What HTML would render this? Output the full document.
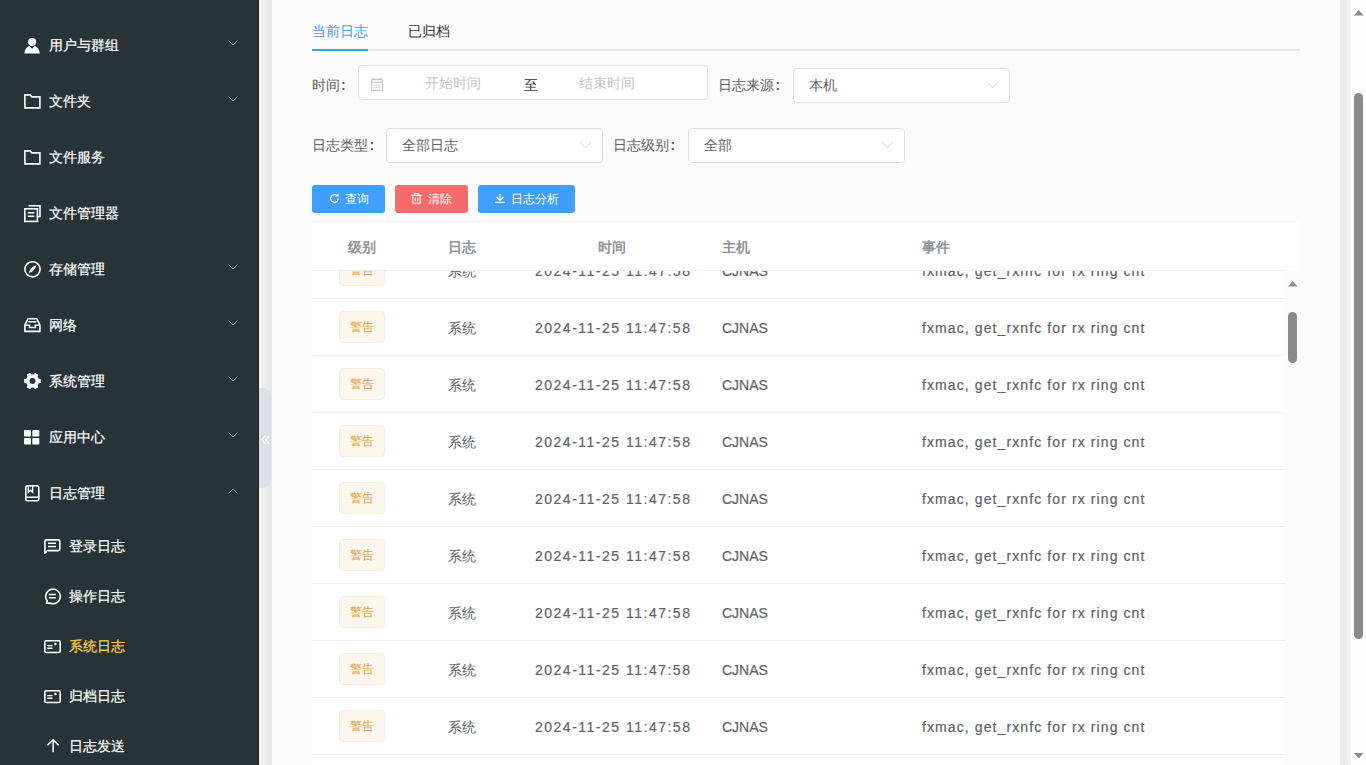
<!DOCTYPE html>
<html><head><meta charset="utf-8">
<style>
*{box-sizing:border-box}
html,body{margin:0;padding:0;width:1366px;height:765px;overflow:hidden;background:#fafafa;font-family:"Liberation Sans",sans-serif}
#side{position:absolute;left:0;top:0;width:259px;height:765px;background:#273338;border-right:1px solid #1c252b}
.t{position:absolute;white-space:nowrap}
svg{position:absolute;overflow:visible}
.mt{color:#fff;font-size:14px;line-height:16px;-webkit-text-stroke:0.2px currentColor}
#strip{position:absolute;left:259px;top:0;width:13px;height:765px;background:linear-gradient(to right,#f3f3f3 0,#f1f1f1 2px,#eeeeee 7px,#e7e7e7 11px,#e7e7ee 13px)}
#collapse{position:absolute;left:259px;top:388px;width:12px;height:100px;background:#dcdfe8;border-radius:0 9px 9px 0}
#main{position:absolute;left:272px;top:0;width:1068px;height:765px;background:#fbfbfb}
#rstrip{position:absolute;left:1340px;top:0;width:11px;height:765px;background:linear-gradient(to right,#e9eaf2 0,#e7e7e7 1.5px,#ebebeb 4px,#f2f2f2 11px)}
#vscroll{position:absolute;left:1351px;top:0;width:15px;height:765px;background:#fcfcfc}
.box{position:absolute;background:#fff;border:1px solid #dcdfe6;border-radius:4px}
.lbl{color:#606266;font-size:14px;line-height:16px}
.btn{position:absolute;top:185px;height:28px;border-radius:3px}
.bt{color:#fff;font-size:12px;line-height:14px}
#thead{position:absolute;left:312px;top:223px;width:988px;height:48px;background:#fff}
#thline{position:absolute;left:312px;top:270px;width:973px;height:1px;background:#ebeef5}
.th{font-size:14px;font-weight:bold;color:#909399;line-height:16px}
#tbody{position:absolute;left:312px;top:271px;width:973px;height:494px;overflow:hidden;background:#fff}
.row{position:absolute;left:0;width:973px;height:57px;border-bottom:1px solid #ebeef5}
.tag{position:absolute;left:27px;top:12px;width:46px;height:32px;background:#fdf6ec;border:1px solid #faecd8;border-radius:4px}
.tagt{color:#e6a23c;font-size:12px;line-height:14px}
.td{font-size:14px;color:#606266;line-height:16px}
</style></head><body>
<div id="main"></div>
<div id="side"><svg style="left:23.8px;top:37.6px" width="17" height="17"><circle cx="8.1" cy="4.0" r="4.0" fill="#fff"/><path d="M0.4 15.4 C0.6 11.6 2.7 8.9 5.5 8.0 L8.1 10.7 L10.7 8.0 C13.5 8.9 15.6 11.6 15.8 15.4 Z" fill="#fff"/></svg><div class="t mt" style="left:49px;top:37px;">用户与群组</div><svg style="left:228px;top:40px" width="10" height="6" viewBox="0 0 10 6"><path d="M0.5 0.5 L5 5 L9.5 0.5" stroke="#909399" stroke-width="1" fill="none"/></svg><svg style="left:23.6px;top:93.8px" width="17" height="17"><path d="M0.9 0.9 H6 L8 2.9 H15.9 V13.9 H0.9 Z" stroke="#fff" stroke-width="1.6" fill="none" stroke-linejoin="miter"/></svg><div class="t mt" style="left:49px;top:93px;">文件夹</div><svg style="left:228px;top:96px" width="10" height="6" viewBox="0 0 10 6"><path d="M0.5 0.5 L5 5 L9.5 0.5" stroke="#909399" stroke-width="1" fill="none"/></svg><svg style="left:23.6px;top:149.8px" width="17" height="17"><path d="M0.9 0.9 H6 L8 2.9 H15.9 V13.9 H0.9 Z" stroke="#fff" stroke-width="1.6" fill="none" stroke-linejoin="miter"/></svg><div class="t mt" style="left:49px;top:149px;">文件服务</div><svg style="left:23.6px;top:204.6px" width="17" height="17"><path d="M5.3 1.6 V0.8 H16 V11.5 H13.8" stroke="#fff" stroke-width="1.6" fill="none"/><rect x="0.8" y="3.8" width="12.6" height="12.6" stroke="#fff" stroke-width="1.6" fill="none"/><path d="M3.7 7.8 H10.3 M3.7 11.2 H10.3" stroke="#fff" stroke-width="1.5"/></svg><div class="t mt" style="left:49px;top:205px;">文件管理器</div><svg style="left:23.6px;top:260.8px" width="17" height="17"><circle cx="8.5" cy="8.3" r="7.6" stroke="#fff" stroke-width="1.6" fill="none"/><path d="M4.8 12 C5.5 8.5 8.5 5.2 12.3 4.3 C11.5 8 8.6 11.2 4.8 12 Z" fill="#fff"/></svg><div class="t mt" style="left:49px;top:261px;">存储管理</div><svg style="left:228px;top:264px" width="10" height="6" viewBox="0 0 10 6"><path d="M0.5 0.5 L5 5 L9.5 0.5" stroke="#909399" stroke-width="1" fill="none"/></svg><svg style="left:23.6px;top:317.8px" width="17" height="17"><path d="M0.9 13.4 V7.2 L3.9 0.8 H12.9 L15.9 7.2 V13.4 Z" stroke="#fff" stroke-width="1.6" fill="none" stroke-linejoin="round"/><path d="M1 7.2 H5.5 V9.6 H11.3 V7.2 H15.8 M4.3 3.7 H12.5" stroke="#fff" stroke-width="1.5" fill="none"/></svg><div class="t mt" style="left:49px;top:317px;">网络</div><svg style="left:228px;top:320px" width="10" height="6" viewBox="0 0 10 6"><path d="M0.5 0.5 L5 5 L9.5 0.5" stroke="#909399" stroke-width="1" fill="none"/></svg><svg style="left:23.5px;top:372.9px" width="17" height="17"><path fill="#fff" fill-rule="evenodd" d="M14.70 5.74 L16.78 6.09 L16.78 9.91 L14.70 10.26 L13.56 12.24 L14.30 14.22 L10.99 16.13 L9.65 14.50 L7.35 14.50 L6.01 16.13 L2.70 14.22 L3.44 12.24 L2.30 10.26 L0.22 9.91 L0.22 6.09 L2.30 5.74 L3.44 3.76 L2.70 1.78 L6.01 -0.13 L7.35 1.50 L9.65 1.50 L10.99 -0.13 L14.30 1.78 L13.56 3.76 Z M11.40 8.00 A2.9 2.9 0 1 0 5.60 8.00 A2.9 2.9 0 1 0 11.40 8.00 Z"/></svg><div class="t mt" style="left:49px;top:373px;">系统管理</div><svg style="left:228px;top:376px" width="10" height="6" viewBox="0 0 10 6"><path d="M0.5 0.5 L5 5 L9.5 0.5" stroke="#909399" stroke-width="1" fill="none"/></svg><svg style="left:24.4px;top:429.8px" width="17" height="17"><rect x="0" y="0" width="7" height="6.6" rx="0.8" fill="#fff"/><rect x="8.3" y="0" width="7" height="6.6" rx="0.8" fill="#fff"/><rect x="0" y="7.9" width="7" height="6.6" rx="0.8" fill="#fff"/><rect x="8.3" y="7.9" width="7" height="6.6" rx="0.8" fill="#fff"/></svg><div class="t mt" style="left:49px;top:429px;">应用中心</div><svg style="left:228px;top:432px" width="10" height="6" viewBox="0 0 10 6"><path d="M0.5 0.5 L5 5 L9.5 0.5" stroke="#909399" stroke-width="1" fill="none"/></svg><svg style="left:24.9px;top:484.8px" width="17" height="17"><rect x="0.8" y="0.8" width="13" height="15" rx="1.6" stroke="#fff" stroke-width="1.6" fill="none"/><path d="M3.4 1 V7.2 L5.5 5.5 L7.6 7.2 V1 M1 12.2 H13.6" stroke="#fff" stroke-width="1.5" fill="none"/></svg><div class="t mt" style="left:49px;top:485px;">日志管理</div><svg style="left:228px;top:488px" width="10" height="6" viewBox="0 0 10 6"><path d="M0.5 5.5 L5 1 L9.5 5.5" stroke="#909399" stroke-width="1" fill="none"/></svg><svg style="left:43.8px;top:539px" width="17" height="17"><path d="M0.9 14.2 V2.5 Q0.9 0.9 2.5 0.9 H14.2 Q15.8 0.9 15.8 2.5 V10 Q15.8 11.6 14.2 11.6 H3.5 Z" stroke="#fff" stroke-width="1.6" fill="none" stroke-linejoin="round"/><path d="M4 4.2 H12 M4 7.5 H12" stroke="#fff" stroke-width="1.5"/></svg><div class="t mt" style="left:69px;top:538px;">登录日志</div><svg style="left:43.8px;top:589px" width="17" height="17"><path d="M2.4 14.2 L3.3 12 A7.3 7.3 0 1 1 5.8 14 Z" stroke="#fff" stroke-width="1.5" fill="none" stroke-linejoin="round"/><path d="M4.8 5.6 H11.8 M4.8 8.8 H11.8" stroke="#fff" stroke-width="1.5"/></svg><div class="t mt" style="left:69px;top:588px;">操作日志</div><svg style="left:43.8px;top:640px" width="17" height="17"><rect x="0.8" y="0.8" width="15.4" height="11.7" rx="1.4" stroke="#fff" stroke-width="1.6" fill="none"/><path d="M3.2 5.6 H8.5 M3.2 8.3 H8.5" stroke="#fff" stroke-width="1.4"/><circle cx="11.4" cy="4" r="1.2" fill="#fff"/></svg><div class="t mt" style="left:69px;top:638px;color:#ffd04b">系统日志</div><svg style="left:43.8px;top:690px" width="17" height="17"><rect x="0.8" y="0.8" width="15.4" height="11.7" rx="1.4" stroke="#fff" stroke-width="1.6" fill="none"/><path d="M3.2 5.6 H8.5 M3.2 8.3 H8.5" stroke="#fff" stroke-width="1.4"/><circle cx="11.4" cy="4" r="1.2" fill="#fff"/></svg><div class="t mt" style="left:69px;top:688px;">归档日志</div><svg style="left:46.6px;top:739px" width="17" height="17"><path d="M6.1 13.2 V1 M0.5 6.3 L6.1 0.7 L11.7 6.3" stroke="#fff" stroke-width="1.5" fill="none"/></svg><div class="t mt" style="left:69px;top:738px;">日志发送</div></div>
<div id="strip"></div>
<div id="collapse"></div>
<div id="rstrip"></div>
<div id="vscroll"></div>
<div class="t lbl" style="left:312px;top:23px;color:#409eff">当前日志</div><div class="t lbl" style="left:408px;top:23px;color:#303133">已归档</div><div style="position:absolute;left:312px;top:49px;width:988px;height:2px;background:#e4e7ed"></div><div style="position:absolute;left:312px;top:49px;width:56px;height:2px;background:#409eff"></div><div class="t lbl" style="left:312px;top:77px;">时间<span style="margin-left:1px;font-weight:bold">:</span></div><div class="box" style="left:358px;top:65px;width:350px;height:35px"></div><div class="t lbl" style="left:425px;top:75px;color:#c0c4cc">开始时间</div><div class="t lbl" style="left:524px;top:77px;color:#303133">至</div><div class="t lbl" style="left:579px;top:75px;color:#c0c4cc">结束时间</div><div class="t lbl" style="left:718px;top:77px;">日志来源<span style="margin-left:1.5px;font-weight:bold">:</span></div><div class="box" style="left:793px;top:68px;width:217px;height:35px"></div><div class="t lbl" style="left:809px;top:77px;">本机</div><div class="t lbl" style="left:312px;top:137px;">日志类型<span style="margin-left:1.5px;font-weight:bold">:</span></div><div class="box" style="left:386px;top:128px;width:217px;height:35px"></div><div class="t lbl" style="left:402px;top:137px;">全部日志</div><div class="t lbl" style="left:613px;top:137px;">日志级别<span style="margin-left:1.5px;font-weight:bold">:</span></div><div class="box" style="left:688px;top:128px;width:217px;height:35px"></div><div class="t lbl" style="left:704px;top:137px;">全部</div><div class="btn" style="left:312px;width:73px;background:#409eff"></div><div class="t bt" style="left:345px;top:192px;">查询</div><div class="btn" style="left:395px;width:73px;background:#f56c6c"></div><div class="t bt" style="left:428px;top:192px;">清除</div><div class="btn" style="left:478px;width:97px;background:#409eff"></div><div class="t bt" style="left:511px;top:192px;">日志分析</div><svg style="left:987px;top:82px" width="11" height="7"><path d="M0.5 0.5 L5.5 5.8 L10.5 0.5" stroke="#c8cbd2" stroke-width="0.95" fill="none"/></svg><svg style="left:580px;top:142px" width="11" height="7"><path d="M0.5 0.5 L5.5 5.8 L10.5 0.5" stroke="#c8cbd2" stroke-width="0.95" fill="none"/></svg><svg style="left:882px;top:142px" width="11" height="7"><path d="M0.5 0.5 L5.5 5.8 L10.5 0.5" stroke="#c8cbd2" stroke-width="0.95" fill="none"/></svg><svg style="left:371px;top:78px" width="12" height="13"><rect x="0.6" y="1.4" width="10.8" height="11" rx="0.8" stroke="#c0c4cc" stroke-width="1.1" fill="none"/><path d="M0.6 4.3 H11.4" stroke="#c0c4cc" stroke-width="1"/><path d="M3 0 V2.2 M8.8 0 V2.2" stroke="#c0c4cc" stroke-width="1"/><path d="M2.6 7.2 H9.4 M2.6 9.4 H9.4" stroke="#c0c4cc" stroke-width="0.9" stroke-dasharray="1.6 0.8"/></svg><svg style="left:330px;top:194px" width="9" height="9"><path d="M8.2 4.5 A3.8 3.8 0 1 1 6.9 1.6" stroke="#fff" stroke-width="1.2" fill="none"/><path d="M5.2 2.4 L8.6 2.4 L8.6 -0.6 Z" fill="#fff"/></svg><svg style="left:411px;top:193px" width="11" height="11"><path d="M0.3 2.3 H10.7" stroke="#fff" stroke-width="1.1"/><path d="M3.5 2.3 V0.6 H7.5 V2.3" stroke="#fff" stroke-width="1.1" fill="none"/><path d="M1.8 2.3 V10.3 H9.2 V2.3" stroke="#fff" stroke-width="1.1" fill="none"/><path d="M4.3 4.5 V8.3 M6.7 4.5 V8.3" stroke="#fff" stroke-width="1"/></svg><svg style="left:495px;top:194px" width="10" height="9"><path d="M5 0 V6.2 M1.4 3 L5 6.5 L8.6 3" stroke="#fff" stroke-width="1.1" fill="none"/><path d="M0.2 8.4 H9.8" stroke="#fff" stroke-width="1.1"/></svg><div id="thead"></div><div id="thline"></div><div class="t th" style="left:348px;top:239px;">级别</div><div class="t th" style="left:448px;top:239px;">日志</div><div class="t th" style="left:598px;top:239px;">时间</div><div class="t th" style="left:722px;top:239px;">主机</div><div class="t th" style="left:922px;top:239px;">事件</div><div id="tbody"><div class="row" style="top:-29px"><div class="tag"></div><div class="t tagt" style="left:38px;top:21px;">警告</div><div class="t td" style="left:136px;top:21px;">系统</div><div class="t td" style="left:223px;top:21px;letter-spacing:1.5px;-webkit-text-stroke:0.2px #606266">2024-11-25 11:47:58</div><div class="t td" style="left:410px;top:21px;-webkit-text-stroke:0.2px #606266">CJNAS</div><div class="t td" style="left:610px;top:21px;letter-spacing:1.1px;-webkit-text-stroke:0.2px #606266">fxmac, get_rxnfc for rx ring cnt</div></div><div class="row" style="top:28px"><div class="tag"></div><div class="t tagt" style="left:38px;top:21px;">警告</div><div class="t td" style="left:136px;top:21px;">系统</div><div class="t td" style="left:223px;top:21px;letter-spacing:1.5px;-webkit-text-stroke:0.2px #606266">2024-11-25 11:47:58</div><div class="t td" style="left:410px;top:21px;-webkit-text-stroke:0.2px #606266">CJNAS</div><div class="t td" style="left:610px;top:21px;letter-spacing:1.1px;-webkit-text-stroke:0.2px #606266">fxmac, get_rxnfc for rx ring cnt</div></div><div class="row" style="top:85px"><div class="tag"></div><div class="t tagt" style="left:38px;top:21px;">警告</div><div class="t td" style="left:136px;top:21px;">系统</div><div class="t td" style="left:223px;top:21px;letter-spacing:1.5px;-webkit-text-stroke:0.2px #606266">2024-11-25 11:47:58</div><div class="t td" style="left:410px;top:21px;-webkit-text-stroke:0.2px #606266">CJNAS</div><div class="t td" style="left:610px;top:21px;letter-spacing:1.1px;-webkit-text-stroke:0.2px #606266">fxmac, get_rxnfc for rx ring cnt</div></div><div class="row" style="top:142px"><div class="tag"></div><div class="t tagt" style="left:38px;top:21px;">警告</div><div class="t td" style="left:136px;top:21px;">系统</div><div class="t td" style="left:223px;top:21px;letter-spacing:1.5px;-webkit-text-stroke:0.2px #606266">2024-11-25 11:47:58</div><div class="t td" style="left:410px;top:21px;-webkit-text-stroke:0.2px #606266">CJNAS</div><div class="t td" style="left:610px;top:21px;letter-spacing:1.1px;-webkit-text-stroke:0.2px #606266">fxmac, get_rxnfc for rx ring cnt</div></div><div class="row" style="top:199px"><div class="tag"></div><div class="t tagt" style="left:38px;top:21px;">警告</div><div class="t td" style="left:136px;top:21px;">系统</div><div class="t td" style="left:223px;top:21px;letter-spacing:1.5px;-webkit-text-stroke:0.2px #606266">2024-11-25 11:47:58</div><div class="t td" style="left:410px;top:21px;-webkit-text-stroke:0.2px #606266">CJNAS</div><div class="t td" style="left:610px;top:21px;letter-spacing:1.1px;-webkit-text-stroke:0.2px #606266">fxmac, get_rxnfc for rx ring cnt</div></div><div class="row" style="top:256px"><div class="tag"></div><div class="t tagt" style="left:38px;top:21px;">警告</div><div class="t td" style="left:136px;top:21px;">系统</div><div class="t td" style="left:223px;top:21px;letter-spacing:1.5px;-webkit-text-stroke:0.2px #606266">2024-11-25 11:47:58</div><div class="t td" style="left:410px;top:21px;-webkit-text-stroke:0.2px #606266">CJNAS</div><div class="t td" style="left:610px;top:21px;letter-spacing:1.1px;-webkit-text-stroke:0.2px #606266">fxmac, get_rxnfc for rx ring cnt</div></div><div class="row" style="top:313px"><div class="tag"></div><div class="t tagt" style="left:38px;top:21px;">警告</div><div class="t td" style="left:136px;top:21px;">系统</div><div class="t td" style="left:223px;top:21px;letter-spacing:1.5px;-webkit-text-stroke:0.2px #606266">2024-11-25 11:47:58</div><div class="t td" style="left:410px;top:21px;-webkit-text-stroke:0.2px #606266">CJNAS</div><div class="t td" style="left:610px;top:21px;letter-spacing:1.1px;-webkit-text-stroke:0.2px #606266">fxmac, get_rxnfc for rx ring cnt</div></div><div class="row" style="top:370px"><div class="tag"></div><div class="t tagt" style="left:38px;top:21px;">警告</div><div class="t td" style="left:136px;top:21px;">系统</div><div class="t td" style="left:223px;top:21px;letter-spacing:1.5px;-webkit-text-stroke:0.2px #606266">2024-11-25 11:47:58</div><div class="t td" style="left:410px;top:21px;-webkit-text-stroke:0.2px #606266">CJNAS</div><div class="t td" style="left:610px;top:21px;letter-spacing:1.1px;-webkit-text-stroke:0.2px #606266">fxmac, get_rxnfc for rx ring cnt</div></div><div class="row" style="top:427px"><div class="tag"></div><div class="t tagt" style="left:38px;top:21px;">警告</div><div class="t td" style="left:136px;top:21px;">系统</div><div class="t td" style="left:223px;top:21px;letter-spacing:1.5px;-webkit-text-stroke:0.2px #606266">2024-11-25 11:47:58</div><div class="t td" style="left:410px;top:21px;-webkit-text-stroke:0.2px #606266">CJNAS</div><div class="t td" style="left:610px;top:21px;letter-spacing:1.1px;-webkit-text-stroke:0.2px #606266">fxmac, get_rxnfc for rx ring cnt</div></div></div><svg style="left:1288px;top:281px" width="10" height="6"><path d="M0 5.5 L4.75 0 L9.5 5.5 Z" fill="#8b8b8b"/></svg><div style="position:absolute;left:1288px;top:312px;width:9px;height:51px;border-radius:4.5px;background:#8b8b8b"></div><svg style="left:1354px;top:10px" width="10" height="6"><path d="M0 5.5 L4.75 0 L9.5 5.5 Z" fill="#8b8b8b"/></svg><div style="position:absolute;left:1354px;top:93px;width:9px;height:546px;border-radius:4.5px;background:#8b8b8b"></div><svg style="left:1354px;top:753px" width="10" height="6"><path d="M0 0 L4.75 5.5 L9.5 0 Z" fill="#8b8b8b"/></svg><svg style="left:260.5px;top:435px" width="9" height="10"><path d="M4.6 0.6 L0.9 4.8 L4.6 9 M8.4 0.6 L4.7 4.8 L8.4 9" stroke="#fff" stroke-width="1.2" fill="none"/></svg>
</body></html>
